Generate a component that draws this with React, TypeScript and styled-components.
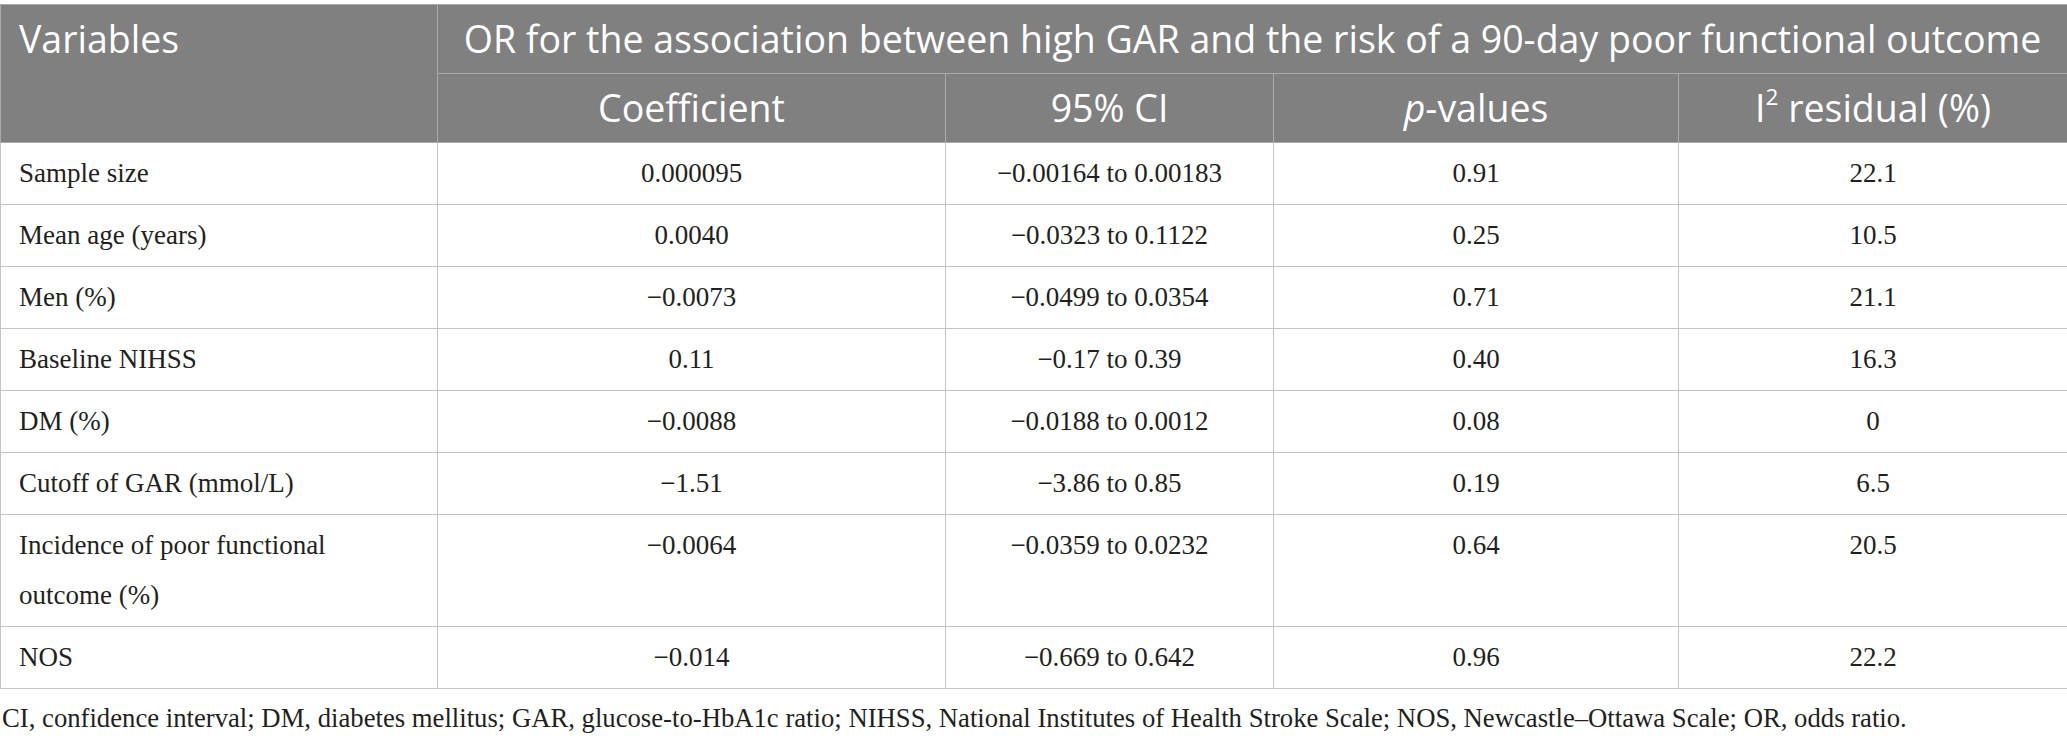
import React from "react";
import styled, { createGlobalStyle } from "styled-components";

const Global = createGlobalStyle`
  html, body { margin: 0; padding: 0; background: #ffffff; }
  #root { width: 2067px; }
`;

const Page = styled.div`
  width: 2067px;
  padding-top: 4px;
  box-sizing: border-box;
`;

const Table = styled.table`
  width: 2067px;
  border-collapse: collapse;
  table-layout: fixed;
`;

const HeadCell = styled.th<{ $align?: "left" | "center" }>`
  background: #7f807f;
  color: #ffffff;
  font-family: "Open Sans", "Noto Sans", sans-serif;
  font-weight: 400;
  font-size: 37.5px;
  line-height: 56px;
  padding: 6px 18px;
  text-align: ${(p) => p.$align ?? "center"};
  vertical-align: top;
  border: 1px solid #a9aaa9;
  white-space: nowrap;
`;

const Cell = styled.td<{ $align?: "left" | "center" }>`
  font-family: "Liberation Serif", "Times New Roman", serif;
  font-size: 27px;
  line-height: 50px;
  color: #231f20;
  padding: 5px 18px 6px;
  text-align: ${(p) => p.$align ?? "center"};
  vertical-align: top;
  border: 1px solid #c3c3c3;
`;

const Sup = styled.sup`
  font-size: 60%;
  line-height: 0;
  vertical-align: 0.75em;
`;

const Footnote = styled.p`
  margin: 11px 0 0 2px;
  font-family: "Liberation Serif", "Times New Roman", serif;
  font-size: 26.7px;
  line-height: 36px;
  color: #231f20;
  white-space: nowrap;
`;

type Row = [React.ReactNode, string, string, string, string];

const rows: Row[] = [
  ["Sample size", "0.000095", "\u22120.00164 to 0.00183", "0.91", "22.1"],
  ["Mean age (years)", "0.0040", "\u22120.0323 to 0.1122", "0.25", "10.5"],
  ["Men (%)", "\u22120.0073", "\u22120.0499 to 0.0354", "0.71", "21.1"],
  ["Baseline NIHSS", "0.11", "\u22120.17 to 0.39", "0.40", "16.3"],
  ["DM (%)", "\u22120.0088", "\u22120.0188 to 0.0012", "0.08", "0"],
  ["Cutoff of GAR (mmol/L)", "\u22121.51", "\u22123.86 to 0.85", "0.19", "6.5"],
  [
    <>
      Incidence of poor functional
      <br />
      outcome (%)
    </>,
    "\u22120.0064",
    "\u22120.0359 to 0.0232",
    "0.64",
    "20.5",
  ],
  ["NOS", "\u22120.014", "\u22120.669 to 0.642", "0.96", "22.2"],
];

export default function App() {
  return (
    <Page>
      <Global />
      <Table>
        <colgroup>
          <col style={{ width: 437 }} />
          <col style={{ width: 508 }} />
          <col style={{ width: 328 }} />
          <col style={{ width: 405 }} />
          <col style={{ width: 389 }} />
        </colgroup>
        <thead>
          <tr>
            <HeadCell $align="left" rowSpan={2}>Variables</HeadCell>
            <HeadCell colSpan={4}>
              OR for the association between high GAR and the risk of a 90-day poor functional outcome
            </HeadCell>
          </tr>
          <tr>
            <HeadCell>Coefficient</HeadCell>
            <HeadCell>95% CI</HeadCell>
            <HeadCell>
              <i>p</i>-values
            </HeadCell>
            <HeadCell>
              I<Sup>2</Sup> residual (%)
            </HeadCell>
          </tr>
        </thead>
        <tbody>
          {rows.map((r, i) => (
            <tr key={i}>
              <Cell $align="left">{r[0]}</Cell>
              <Cell>{r[1]}</Cell>
              <Cell>{r[2]}</Cell>
              <Cell>{r[3]}</Cell>
              <Cell>{r[4]}</Cell>
            </tr>
          ))}
        </tbody>
      </Table>
      <Footnote>
        CI, confidence interval; DM, diabetes mellitus; GAR, glucose-to-HbA1c ratio; NIHSS, National Institutes of
        Health Stroke Scale; NOS, Newcastle–Ottawa Scale; OR, odds ratio.
      </Footnote>
    </Page>
  );
}
